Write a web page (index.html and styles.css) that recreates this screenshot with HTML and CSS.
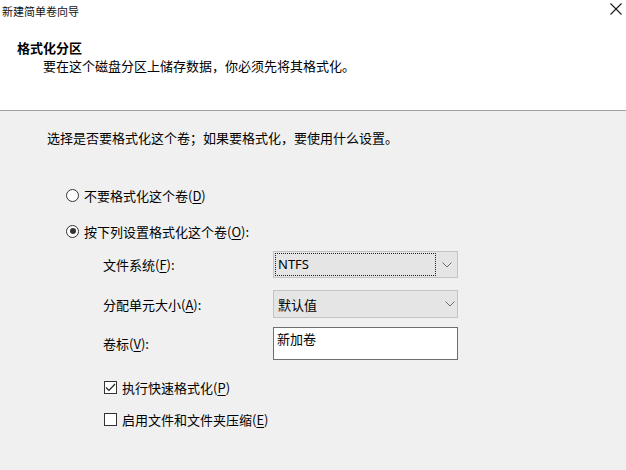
FILE: index.html
```html
<!DOCTYPE html>
<html lang="zh-CN">
<head>
<meta charset="utf-8">
<title>新建简单卷向导</title>
<link rel="stylesheet" href="styles.css">
</head>
<body>
<div class="window">
  <div class="titlebar">
    <span class="title">新建简单卷向导</span>
    <svg class="close" width="12" height="12" viewBox="0 0 12 12"><path d="M0.5 0.5 L11.5 11.5 M11.5 0.5 L0.5 11.5" stroke="#1a1a1a" stroke-width="1.1" fill="none"/></svg>
  </div>
  <div class="header">
    <div class="heading">格式化分区</div>
    <div class="subtitle">要在这个磁盘分区上储存数据，你必须先将其格式化。</div>
  </div>
  <div class="content">
    <p class="intro">选择是否要格式化这个卷；如果要格式化，要使用什么设置。</p>
    <div class="choice first"><span class="radio"></span><span>不要格式化这个卷(<u>D</u>)</span></div>
    <div class="choice second"><span class="radio checked"></span><span>按下列设置格式化这个卷(<u>O</u>):</span></div>
    <div class="form">
      <div class="field f1">
        <span class="label">文件系统(<u>F</u>):</span>
        <div class="combo"><span class="focus">NTFS</span><svg class="chev" width="10" height="6" viewBox="0 0 10 6"><path d="M0.5 0.5 L5 5 L9.5 0.5" stroke="#6d6d6d" stroke-width="1" fill="none"/></svg></div>
      </div>
      <div class="field f2">
        <span class="label">分配单元大小(<u>A</u>):</span>
        <div class="combo tall"><span class="plain">默认值</span><svg class="chev" width="10" height="6" viewBox="0 0 10 6"><path d="M0.5 0.5 L5 5 L9.5 0.5" stroke="#6d6d6d" stroke-width="1" fill="none"/></svg></div>
      </div>
      <div class="field f3">
        <span class="label">卷标(<u>V</u>):</span>
        <div class="textbox">新加卷</div>
      </div>
      <div class="check c1"><span class="box"><svg width="11" height="11" viewBox="0 0 11 11"><path d="M1 5.5 L4 8.5 L10 2" stroke="#222" stroke-width="1.2" fill="none"/></svg></span><span>执行快速格式化(<u>P</u>)</span></div>
      <div class="check c2"><span class="box"></span><span>启用文件和文件夹压缩(<u>E</u>)</span></div>
    </div>
  </div>
</div>
</body>
</html>
```
FILE: styles.css
```css
html, body {
  margin: 0;
  padding: 0;
}
body {
  width: 626px;
  height: 470px;
  overflow: hidden;
  font-family: "Noto Sans CJK SC", "Noto Sans", sans-serif;
  font-size: 13px;
  color: #000;
  background: #fff;
}
.window {
  display: flex;
  flex-direction: column;
  height: 470px;
}
.titlebar {
  height: 22px;
  display: flex;
  justify-content: space-between;
  align-items: flex-start;
  background: #fff;
}
.title {
  font-size: 11px;
  line-height: 22px;
  padding-left: 2px;
  color: #111;
}
.close {
  margin-top: 3px;
  margin-right: 4px;
}
.header {
  height: 88px;
  box-sizing: border-box;
  padding-top: 16px;
  background: #fff;
  border-bottom: 1px solid #a0a0a0;
  height: 89px;
}
.heading {
  font-weight: bold;
  line-height: 19px;
  padding-left: 17px;
}
.subtitle {
  line-height: 18px;
  padding-left: 43px;
}
.content {
  flex: 1;
  background: #f0f0f0;
}
.intro {
  margin: 18px 0 0 0;
  padding-left: 47px;
  line-height: 18px;
}
.choice {
  display: flex;
  align-items: center;
  height: 18px;
  padding-left: 66px;
  gap: 5px;
}
.choice.first { margin-top: 39px; }
.choice.second { margin-top: 18px; }
.radio {
  width: 11px;
  height: 11px;
  border: 1px solid #333;
  border-radius: 50%;
  background: #fff;
  position: relative;
  box-sizing: content-box;
}
.radio.checked::after {
  content: "";
  position: absolute;
  left: 2.5px;
  top: 2.5px;
  width: 6px;
  height: 6px;
  border-radius: 50%;
  background: #333;
}
.form {
  padding-left: 103px;
  margin-top: 11px;
}
.field {
  display: flex;
  align-items: center;
}
.label {
  width: 170px;
}
.f2 { margin-top: 12px; }
.f3 { margin-top: 9px; }
.combo {
  width: 185px;
  height: 27px;
  box-sizing: border-box;
  border: 1px solid #c4c4c4;
  background: #e5e5e5;
  display: flex;
  align-items: center;
  padding: 1px;
}
.combo.tall { height: 28px; }
.focus {
  width: 161px;
  height: 23px;
  box-sizing: border-box;
  border: 1px dotted #222;
  line-height: 21px;
  padding-left: 2px;
  font-family: "Noto Sans", "Noto Sans CJK SC", sans-serif;
  font-size: 13px;
}
.plain {
  width: 161px;
  padding-left: 3px;
  line-height: 21px;
}
.chev {
  margin-left: 6px;
}
.textbox {
  width: 185px;
  height: 33px;
  box-sizing: border-box;
  border: 1px solid #6e6e6e;
  background: #fff;
  padding: 2px 0 0 3px;
  line-height: 18px;
}
.check {
  display: flex;
  align-items: center;
  height: 18px;
  gap: 5px;
  padding-left: 1px;
}
.c1 { margin-top: 18px; }
.c2 { margin-top: 14px; }
.box {
  width: 13px;
  height: 13px;
  box-sizing: border-box;
  border: 1px solid #333;
  background: #fff;
  display: flex;
  align-items: center;
  justify-content: center;
}
.box svg { display: block; }
u {
  text-decoration: underline;
  text-underline-offset: 2px;
}
```
